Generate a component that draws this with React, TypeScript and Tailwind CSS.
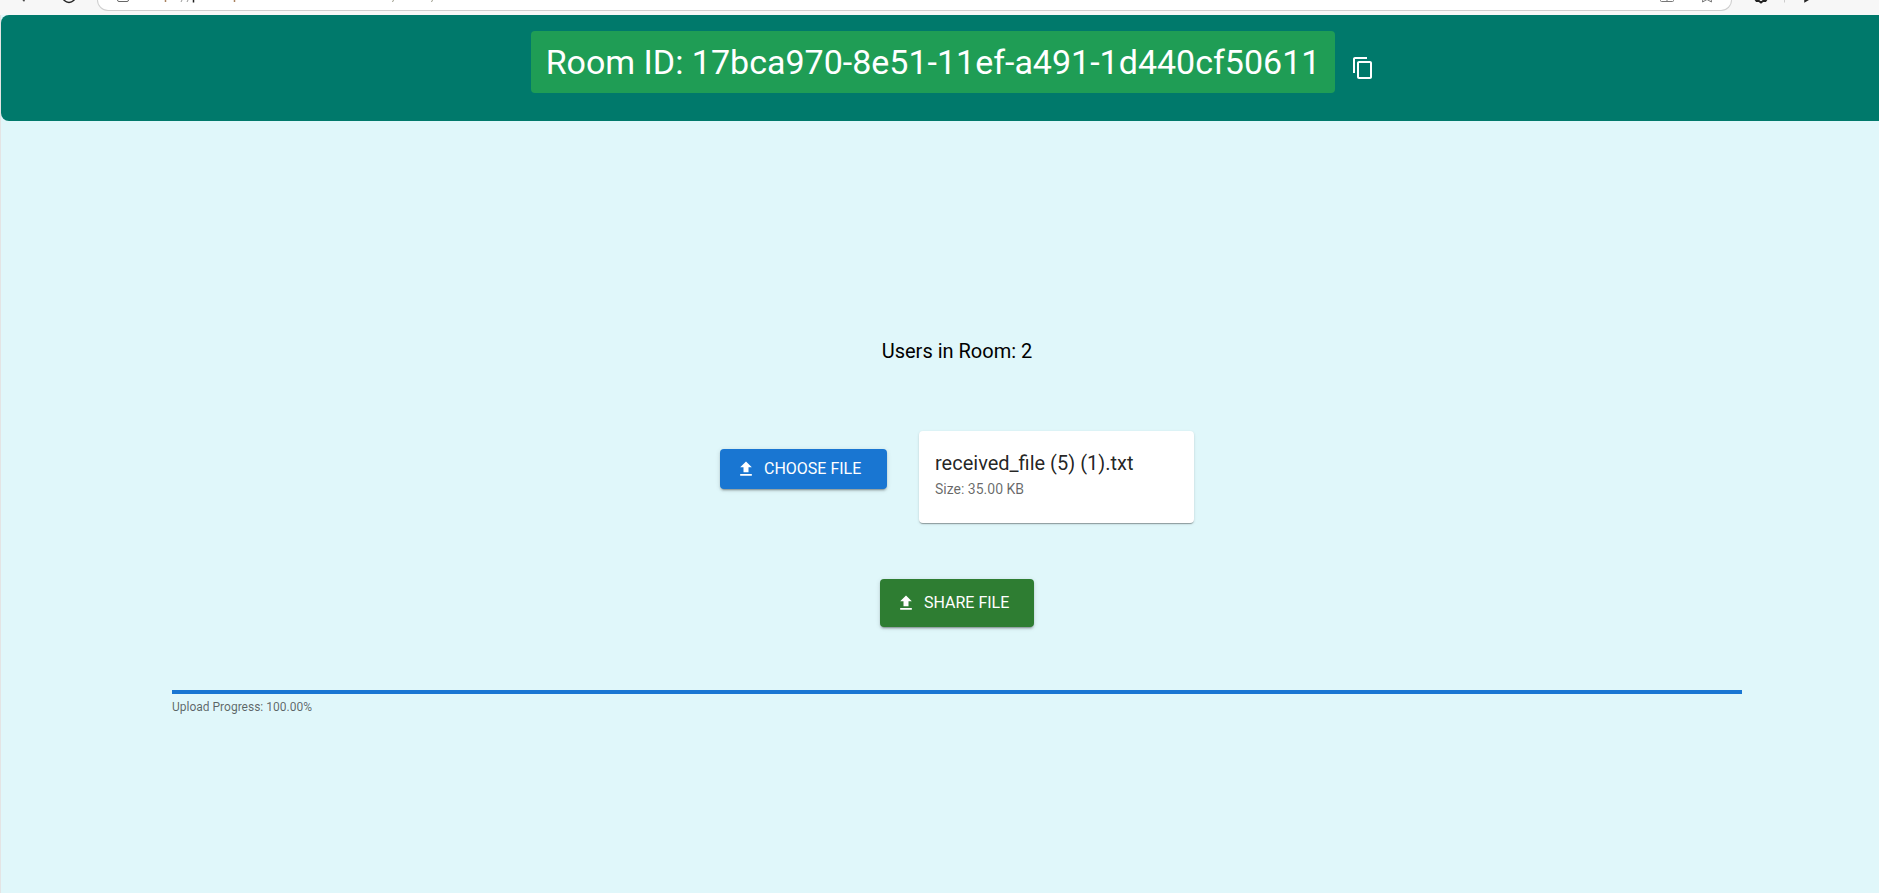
import React from "react";

const roomId = "17bca970-8e51-11ef-a491-1d440cf50611";

function UploadIcon() {
  return (
    <svg className="size-5 shrink-0" viewBox="0 0 24 24" fill="currentColor" aria-hidden="true">
      <path d="M5 20h14v-2H5v2zm0-10h4v6h6v-6h4l-7-7-7 7z" />
    </svg>
  );
}

function CopyIcon() {
  return (
    <svg className="size-6" viewBox="0 0 24 24" fill="currentColor" aria-hidden="true">
      <path d="M16 1H4c-1.1 0-2 .9-2 2v14h2V3h12V1zm3 4H8c-1.1 0-2 .9-2 2v14c0 1.1.9 2 2 2h11c1.1 0 2-.9 2-2V7c0-1.1-.9-2-2-2zm0 16H8V7h11v14z" />
    </svg>
  );
}

/* Lower edge of the browser toolbar: navigation icons, address bar, extension icons. */
function BrowserStrip() {
  return (
    <div className="flex h-[15px] items-start bg-[#f7f7f7]" aria-hidden="true">
      <svg className="h-[15px] w-[97px] shrink-0" viewBox="0 0 97 15" fill="none">
        <path d="M22.5 -1l2 2.3" stroke="#444" strokeWidth="1.5" />
        <circle cx="69" cy="-4" r="6.5" stroke="#222" strokeWidth="1.4" />
      </svg>
      <div className="flex h-[11px] flex-1 justify-between overflow-hidden rounded-b-[16px] border-x border-b border-[#cfcfcf] bg-white">
        <svg className="h-[10px] w-[360px] shrink-0" viewBox="98 0 360 10" fill="none">
          <rect x="117.5" y="-8" width="11" height="9.5" rx="1.5" stroke="#666" />
          <path d="M165.5 0v2M234.5 0v2" stroke="#a9825f" strokeWidth="1.5" />
          <path d="M182 0l-1 2M188 0l-1 2" stroke="#999" />
          <path d="M193.5 0v2.5" stroke="#222" strokeWidth="1.5" />
          <path d="M393.5 0l-1 2M432.5 0l-1 2" stroke="#998" />
        </svg>
        <svg className="h-[10px] w-[90px] shrink-0" viewBox="1641 0 90 10" fill="none" stroke="#777">
          <path d="M1660.5 -2v2.5q0 1 1 1h11q1 0 1-1V-2M1667 -2v3.5" />
          <path d="M1703 -2l-.5 4 4.5-2.5 4.5 2.5-.5-4" />
        </svg>
      </div>
      <svg className="h-[15px] w-[147px] shrink-0" viewBox="1732 0 147 15" fill="none" stroke="#222">
        <path d="M1755 -1l1.5 2h2.5l2 1.5 2-1.5h2.5l1.5-2" strokeWidth="1.8" />
        <path d="M1784.5 0v2.5" stroke="#ccc" />
        <path d="M1805 -2v3.5l5-3" strokeWidth="1.5" />
      </svg>
    </div>
  );
}

export default function App() {
  return (
    <div className="flex min-h-screen flex-col overflow-hidden bg-[#e0f7fa] font-[Roboto,sans-serif]">
      <BrowserStrip />
      <div className="-mr-[34px] flex-1 border-l border-[#e4e4e4]">
        <header className="flex items-center justify-center gap-2 rounded-lg bg-[#00796b] p-4 text-white">
          <h1 className="mb-3 rounded bg-[#1f9d55] px-[15px] py-[10px] text-[34px] leading-[42px]">Room ID: {roomId}</h1>
          <button type="button" aria-label="Copy room ID" className="rounded-full p-2">
            <CopyIcon />
          </button>
        </header>
        <main className="flex flex-col items-center px-[171px] pt-[214px]">
          <h2 className="text-xl leading-8 text-black">Users in Room: 2</h2>
          <div className="mt-16 flex items-center gap-8">
            <button
              type="button"
              className="mb-4 flex h-10 w-[167px] items-center gap-2 rounded bg-[#1976d2] px-4 text-base text-white shadow-[0_3px_1px_-2px_rgba(0,0,0,0.2),0_2px_2px_0_rgba(0,0,0,0.14),0_1px_5px_0_rgba(0,0,0,0.12)]"
            >
              <UploadIcon />
              CHOOSE FILE
            </button>
            <section className="w-[275px] rounded bg-white px-4 pt-4 pb-6 shadow-[0_2px_1px_-1px_rgba(0,0,0,0.2),0_1px_1px_0_rgba(0,0,0,0.14),0_1px_3px_0_rgba(0,0,0,0.12)]">
              <h3 className="text-xl leading-8 text-black/87">received_file (5) (1).txt</h3>
              <p className="text-sm text-black/60">Size: 35.00 KB</p>
            </section>
          </div>
          <button
            type="button"
            className="mt-14 flex h-12 w-[154px] items-center gap-2 rounded bg-[#2e7d32] px-4 text-base text-white shadow-[0_3px_1px_-2px_rgba(0,0,0,0.2),0_2px_2px_0_rgba(0,0,0,0.14),0_1px_5px_0_rgba(0,0,0,0.12)]"
          >
            <UploadIcon />
            SHARE FILE
          </button>
          <div className="mt-[63px] w-full">
            <div role="progressbar" aria-label="Upload progress" aria-valuenow={100} className="h-1 bg-[#1976d2]" />
            <p className="mt-[3px] text-xs leading-5 text-black/60">Upload Progress: 100.00%</p>
          </div>
        </main>
      </div>
    </div>
  );
}
